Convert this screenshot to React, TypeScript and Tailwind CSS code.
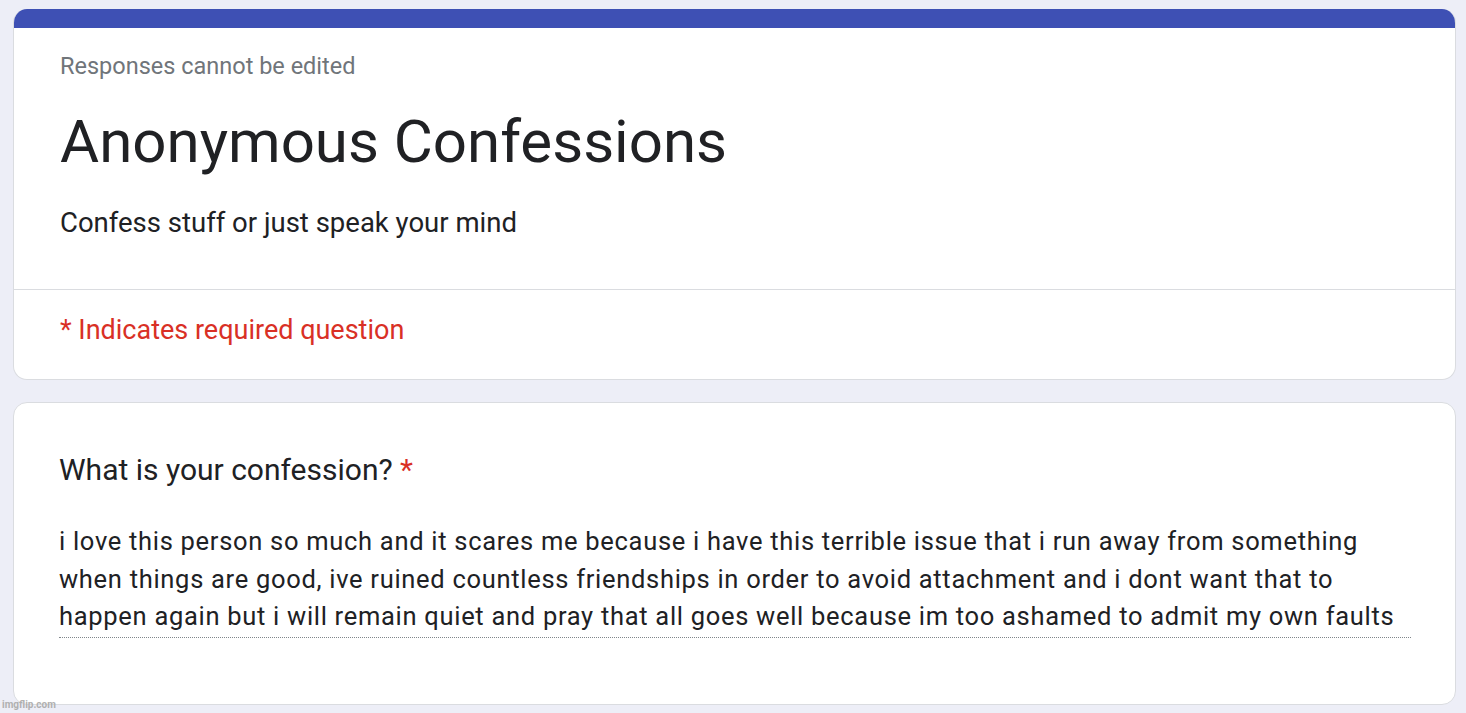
export default function App() {
  return (
    <div className="min-h-[713px] w-full bg-[#edeef7] pt-[9px] pl-[13px] pr-[10px] pb-2 font-['Roboto',_'Liberation_Sans',_sans-serif] relative">
      <div className="w-full rounded-[14px] border border-[#dadce0] border-t-0 bg-white overflow-hidden">
        <div className="h-[19px] bg-[#3e50b4]" />
        <div className="px-[46px] pt-[24px] pb-[48px]">
          <div className="text-[23.5px] leading-[28px] text-[#70757a]">Responses cannot be edited</div>
          <h1 className="mt-[27px] text-[60px] leading-[70px] text-[#202124]">Anonymous Confessions</h1>
          <p className="mt-[28px] text-[27.5px] leading-[36px] text-[#202124]">Confess stuff or just speak your mind</p>
        </div>
        <div className="border-t border-[#dadce0] px-[46px] pt-[24px] pb-[33px]">
          <div className="text-[27px] leading-[32px] text-[#d93025]">* Indicates required question</div>
        </div>
      </div>
      <div className="mt-[22px] w-full rounded-[14px] border border-[#dadce0] bg-white pl-[45px] pr-[44px] pt-[49px] pb-[66px]">
        <div className="text-[30px] leading-[36px] text-[#202124]">
          What is your confession? <span className="text-[#d93025]">*</span>
        </div>
        <div className="mt-[35px] pb-[1px] border-b border-dotted border-[#80868b] text-[25.5px] leading-[37.5px] tracking-[0.7px] text-[#202124]">
          i love this person so much and it scares me because i have this terrible issue that i run away from something when things are good, ive ruined countless friendships in order to avoid attachment and i dont want that to happen again but i will remain quiet and pray that all goes well because im too ashamed to admit my own faults
        </div>
      </div>
      <div className="absolute left-[2px] bottom-[2px] text-[10px] leading-[12px] text-[#b0b0b0] font-bold">imgflip.com</div>
    </div>
  )
}
